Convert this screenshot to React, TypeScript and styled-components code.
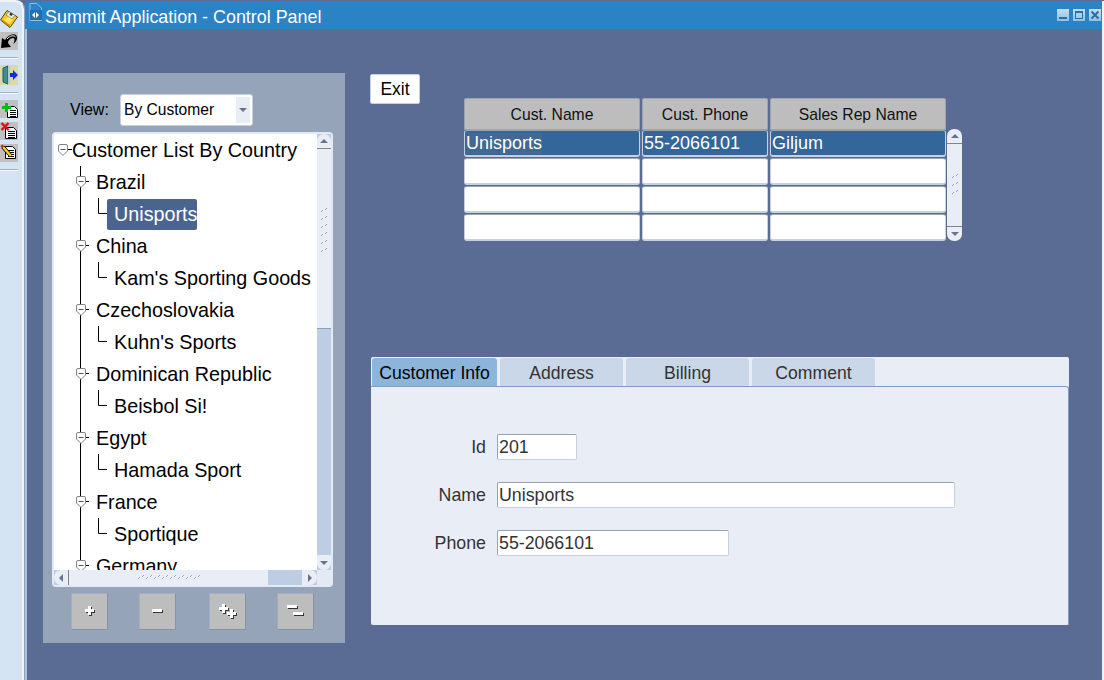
import React, { FC } from 'react';
import styled, { createGlobalStyle } from 'styled-components';

const GlobalStyle = createGlobalStyle`
  html, body {
    margin: 0;
    padding: 0;
    background: #5b6c94;
    overflow: hidden;
  }
  * {
    box-sizing: border-box;
  }
`;

const Page = styled.div`
  display: flex;
  width: 1104px;
  height: 680px;
  overflow: hidden;
  font-family: 'Liberation Sans', Arial, sans-serif;
  color: #000;
  background: #5b6c94;
`;

/* left toolbar */
const ToolStrip = styled.div`
  display: flex;
  flex-direction: column;
  flex: none;
  width: 25px;
  padding-top: 8px;
  background: #d5e4f3;
  border-top: 2px solid #eef4fa;
  border-right: 1px solid #8fa3bf;
  box-shadow: inset -2px 0 0 #eef4fa;
  border-top-right-radius: 9px;
`;

const ToolButton = styled.div<{ $chip?: boolean; $height?: number }>`
  display: flex;
  flex: none;
  width: 18px;
  height: ${p => p.$height ?? 18}px;
  margin-bottom: 4px;
  background: ${p => (p.$chip ? '#c0c0c0' : 'transparent')};
`;

const ToolRule = styled.div`
  width: 18px;
  height: 2px;
  margin: 3px 0 6px;
  background: #f4f7fb;
  border-top: 1px solid #a9b3bf;
`;

/* window */
const Frame = styled.div`
  display: flex;
  flex-direction: column;
  flex: 1;
  margin-top: 1px;
  border-right: 2px solid #eef3f9;
  overflow: hidden;
`;

const TitleBar = styled.div`
  display: flex;
  align-items: center;
  flex: none;
  height: 28px;
  padding: 0 1px 0 3px;
  background: #2b82c5;
  border-left: 1px solid #4a78ab;
  border-top-left-radius: 4px;
`;

const TitleIcon = styled.div`
  display: flex;
  margin-bottom: 7px;
`;

const TitleText = styled.span`
  margin: 4px 0 0 3px;
  font-size: 17.9px;
  color: #fff;
`;

const TitleButtons = styled.div`
  display: flex;
  gap: 4px;
  margin-left: auto;
`;

const TitleButton = styled.div`
  display: flex;
  width: 12px;
  height: 12px;
  background: linear-gradient(#c4def1, #8fc0e5);
`;

const Content = styled.div`
  display: flex;
  flex: 1;
  padding: 44px 0 0 16px;
  border-left: 2px solid #a9c3de;
`;

/* left panel with the tree */
const NavPanel = styled.div`
  display: flex;
  flex-direction: column;
  flex: none;
  width: 302px;
  height: 570px;
  padding: 21px 12px 0 9px;
  background: #95a4b8;
`;

const ViewRow = styled.div`
  display: flex;
  align-items: center;
  height: 32px;
  padding-left: 18px;
  font-size: 16px;
`;

const ViewLabel = styled.span`
  width: 50px;
`;

const Select = styled.div`
  display: flex;
  width: 133px;
  height: 32px;
  padding: 2px;
  background: #fff;
  border: 1px solid #c6d0e0;
  border-radius: 3px;
  font-size: 15.6px;
`;

const SelectValue = styled.span`
  flex: 1;
  padding: 4px 0 0 1px;
`;

const SelectArrow = styled.div`
  display: flex;
  align-items: center;
  justify-content: center;
  width: 14px;
  background: #e9eef6;
`;

const TreeBox = styled.div`
  display: grid;
  grid-template-columns: 1fr 14px;
  grid-template-rows: 1fr 15px;
  width: 281px;
  height: 455px;
  margin-top: 6px;
  background: #c6d3e6;
  border: 2px solid #e4eaf3;
  border-radius: 4px;
`;

const TreeBody = styled.div`
  background: #fff;
  overflow: hidden;
  font-size: 19.75px;
  white-space: nowrap;
`;

const TreeRow = styled.div`
  display: flex;
  align-items: center;
  height: 32px;
`;

const TreeLabel = styled.span<{ $selected?: boolean; $child?: boolean }>`
  display: inline-block;
  height: ${p => (p.$child ? '31px' : 'auto')};
  line-height: ${p => (p.$child ? '31px' : 'normal')};
  padding: ${p => (p.$child ? '0 0 0 7px' : '0')};
  width: ${p => (p.$selected ? '90px' : 'auto')};
  border-radius: 2px;
  background: ${p => (p.$selected ? '#4a648d' : 'transparent')};
  color: ${p => (p.$selected ? '#fff' : '#000')};
`;

const ScrollTrack = styled.div`
  display: flex;
  flex-direction: column;
  align-items: stretch;
  background: #bccde4;
`;

const ScrollFace = styled.div<{ $height: number }>`
  display: flex;
  flex-direction: column;
  height: ${p => p.$height}px;
  background: #e9eef6;
  border-bottom: 1px solid #8fa0b8;
  border-radius: 7px 7px 0 0;
`;

const ScrollEnd = styled.div`
  display: flex;
  align-items: center;
  justify-content: center;
  height: 15px;
  margin-top: auto;
  background: #e9eef6;
  border-radius: 0 0 7px 7px;
`;

const ScrollCap = styled.div`
  display: flex;
  align-items: center;
  justify-content: center;
  flex: none;
  height: 15px;
  border-bottom: 1px solid #7d8794;
`;

const Grip = styled.div<{ $lift?: number }>`
  display: flex;
  flex: 1;
  align-items: center;
  justify-content: center;
  padding-bottom: ${p => p.$lift ?? 0}px;
`;

const HScroll = styled.div`
  display: flex;
  align-items: stretch;
  background: #bccde4;
`;

const HFace = styled.div`
  display: flex;
  align-items: center;
  width: 214px;
  background: #e9eef6;
  border-radius: 7px 0 0 7px;
`;

const HCap = styled.div`
  display: flex;
  align-items: center;
  justify-content: center;
  flex: none;
  width: 15px;
  height: 100%;
  border-right: 1px solid #7d8794;
`;

const HEnd = styled.div`
  display: flex;
  align-items: center;
  justify-content: center;
  width: 15px;
  margin-left: auto;
  background: #e9eef6;
  border-radius: 0 7px 7px 0;
`;

const Corner = styled.div`
  background: #e4eaf3;
`;

const TreeActions = styled.div`
  display: flex;
  gap: 31px;
  margin-top: 6px;
  padding-left: 19px;
`;

const TreeAction = styled.div`
  display: flex;
  align-items: center;
  justify-content: center;
  width: 37px;
  height: 37px;
  background: #bdbdbd;
  border-top: 1px solid #a4afbd;
  border-left: 1px solid #a4afbd;
  border-right: 1px solid #8793a6;
  border-bottom: 1px solid #8793a6;

  &:nth-child(3) {
    margin-left: 2px;
  }
`;

/* right side */
const Main = styled.div`
  display: flex;
  flex-direction: column;
  margin-left: 25px;
`;

const TopRow = styled.div`
  display: flex;
  align-items: flex-start;
`;

const ExitButton = styled.div`
  display: flex;
  align-items: center;
  justify-content: center;
  width: 50px;
  height: 30px;
  margin-top: 1px;
  padding-top: 1px;
  background: #fff;
  border: 1px solid #c6d0e0;
  border-radius: 2px;
  font-size: 17.5px;
`;

const TableArea = styled.div`
  display: flex;
  align-items: flex-end;
  margin: 25px 0 0 44px;
`;

const TableGrid = styled.div`
  display: grid;
  grid-template-columns: 176px 126px 176px;
  grid-template-rows: 31px;
  grid-auto-rows: 27px;
  column-gap: 2px;
  row-gap: 1px;
`;

const HeaderCell = styled.div`
  display: flex;
  align-items: center;
  justify-content: center;
  height: 32px;
  padding-top: 1px;
  background: #bdbdbd;
  border: 1px solid #99a4b5;
  border-radius: 2px 2px 0 0;
  font-size: 15.7px;
  color: #111;
`;

const Cell = styled.div<{ $selected?: boolean }>`
  display: flex;
  align-items: center;
  padding: 1px 0 0 1px;
  background: ${p => (p.$selected ? '#336699' : '#fff')};
  border-style: solid;
  border-width: 1px 1px 2px 1px;
  border-color: #9aa3b0 #c6d0e0 #c6d0e0 #c6d0e0;
  border-radius: 3px;
  font-size: 18px;
  color: ${p => (p.$selected ? '#fff' : '#000')};
`;

const CellText = styled.span<{ $shaded?: boolean }>`
  background: ${p => (p.$shaded ? '#44688f' : 'transparent')};
`;

const TableScroll = styled.div`
  display: flex;
  flex-direction: column;
  width: 15px;
  height: 112px;
  margin-left: 1px;
  background: #e9eef6;
  border-radius: 7px;
`;

const TableScrollEnd = styled(ScrollCap)`
  border-bottom: 0;
  border-top: 1px solid #7d8794;
`;

const TabPanel = styled.div`
  display: flex;
  flex-direction: column;
  width: 698px;
  height: 268px;
  margin: 116px 0 0 1px;
  background: #e9eef6;
  border-radius: 2px;
`;

const TabStrip = styled.div`
  display: flex;
  flex: none;
  gap: 3px;
  height: 29px;
  padding: 1px 0 0 1px;
`;

const Tab = styled.div<{ $active?: boolean; $width: number }>`
  display: flex;
  align-items: center;
  justify-content: center;
  width: ${p => p.$width}px;
  padding-top: 2px;
  background: ${p => (p.$active ? '#8db5d9' : '#c9d7e8')};
  border-radius: 3px 3px 0 0;
  font-size: 17.6px;
  color: ${p => (p.$active ? '#000' : '#333')};
`;

const TabBody = styled.div`
  flex: 1;
  border-top: 1px solid #7d9cc0;
  border-right: 1px solid #7d9cc0;
  border-top-right-radius: 3px;
`;

const Form = styled.div`
  display: grid;
  grid-template-columns: 115px auto;
  align-items: center;
  justify-content: start;
  column-gap: 11px;
  row-gap: 22px;
  padding-top: 47px;
`;

const FieldLabel = styled.span`
  font-size: 17.8px;
  text-align: right;
  color: #333;
`;

const FieldBox = styled.div<{ $width: number }>`
  display: flex;
  align-items: center;
  width: ${p => p.$width}px;
  height: 26px;
  padding-left: 1px;
  background: #fff;
  border: 1px solid #c6d0e0;
  border-top-color: #9aa3b0;
  border-left-color: #9aa3b0;
  border-radius: 2px;
  font-size: 17.8px;
  color: #333;
`;

/* drawings */
const Triangle: FC<{ dir: 'up' | 'down' | 'left' | 'right' }> = ({ dir }) => {
  const points = {
    up: '1,7 5,3 9,7',
    down: '1,3 9,3 5,7',
    left: '7,1 7,9 3,5',
    right: '3,1 3,9 7,5',
  }[dir];
  return (
    <svg width='10' height='10' viewBox='0 0 10 10'>
      <polygon points={points} fill='#6a7488' />
    </svg>
  );
};

const GripDots: FC<{ cols: number; rows: number }> = ({ cols, rows }) => (
  <svg width={cols * 8} height={rows * 8} viewBox={`0 0 ${cols * 8} ${rows * 8}`}>
    {Array.from({ length: rows }).map((_, r) =>
      Array.from({ length: cols }).map((_, c) => (
        <g key={`${r}-${c}`}>
          <path d={`M${c * 8 + 1} ${r * 8 + 5} l2 -2`} stroke='#9aa6b8' />
          <path d={`M${c * 8 + 5} ${r * 8 + 3} l2 -2`} stroke='#9aa6b8' />
        </g>
      )),
    )}
  </svg>
);

const Shield: FC<{ x: number }> = ({ x }) => (
  <g transform={`translate(${x} 0)`}>
    <path
      d='M0.5 12 Q0.5 10.5 2 10.5 H8 Q9.5 10.5 9.5 12 V17 L5 21.5 L0.5 17 Z'
      fill='#fff'
      stroke='#7b8488'
    />
    <path d='M2.5 15.5 H7.5' stroke='#555' />
  </g>
);

const CountryGuide: FC = () => (
  <svg width='42' height='32' viewBox='0 0 42 32'>
    <path d='M26.5 0 V32' stroke='#000' />
    <Shield x={22} />
    <path d='M32 15.5 H35' stroke='#000' />
  </svg>
);

const RootGuide: FC = () => (
  <svg width='18' height='32' viewBox='0 0 18 32'>
    <Shield x={4} />
    <path d='M14 15.5 H18' stroke='#000' />
  </svg>
);

const ChildGuide: FC = () => (
  <svg width='53' height='32' viewBox='0 0 53 32'>
    <path d='M26.5 0 V32' stroke='#000' />
    <path d='M44.5 0 V15.5 H53' stroke='#000' fill='none' />
  </svg>
);

const Floppy: FC = () => (
  <svg width='18' height='18' viewBox='0 0 18 18'>
    <polygon points='7,0.5 17.5,7 10,17.5 0.5,10' fill='#f7c81e' stroke='#5a4600' />
    <polygon points='9,1.5 15,5.5 12,9 6,5' fill='#e6e6e6' stroke='#666' strokeWidth='0.6' />
    <rect x='10' y='3' width='2.5' height='2.5' fill='#333' transform='rotate(32 11 4)' />
    <polygon points='4,10 8,6.5 13,10 9,14.5' fill='#ffe35a' />
    <polygon points='1,10 10,17 10,15 3,10' fill='#e08a00' />
  </svg>
);

const Undo: FC = () => (
  <svg width='18' height='18' viewBox='0 0 18 18'>
    <path
      d='M1 16 L2 6 L5 8 C8 3 13 1 16 3 C18 5 17 10 13 12 C15 9 15 6 13 6 C10 6 8 9 8 11 L11 15 Z'
      fill='#000'
    />
    <path d='M7 7 C10 3.5 14 3 15.5 5' stroke='#fff' fill='none' />
  </svg>
);

const DoorOut: FC = () => (
  <svg width='18' height='20' viewBox='0 0 18 20'>
    <rect x='0' y='0' width='18' height='20' fill='#d9d9ac' />
    <polygon points='3,3 8,1 8,19 3,17' fill='#3f8f8f' stroke='#1f5f5f' />
    <rect x='8' y='1' width='2' height='18' fill='#b8c8d8' />
    <polygon points='10,8 13,8 13,5 18,10 13,15 13,12 10,12' fill='#1030e0' />
  </svg>
);

const DocLines: FC<{ x: number; y: number; w: number; h: number }> = ({ x, y, w, h }) => (
  <>
    <path
      d={`M${x + 0.5} ${y + 0.5} H${x + w - 3.5} L${x + w - 0.5} ${y + 3.5} V${y + h - 0.5} H${x + 0.5} Z`}
      fill='#fff'
      stroke='#000'
    />
    {[4, 6, 8, 10].filter(d => d < h - 1).map(d => (
      <path key={d} d={`M${x + 3} ${y + d + 0.5} H${x + w - 2}`} stroke='#000' />
    ))}
  </>
);

const DocAdd: FC = () => (
  <svg width='18' height='18' viewBox='0 0 18 18'>
    <DocLines x={7} y={6} w={11} h={12} />
    <path d='M6.5 3 V12 M2 7.5 H11' stroke='#00b828' strokeWidth='3' />
  </svg>
);

const DocDelete: FC = () => (
  <svg width='18' height='18' viewBox='0 0 18 18'>
    <DocLines x={5} y={5} w={12} h={12} />
    <path d='M1.5 1 L8.5 8 M8.5 1 L1.5 8' stroke='#e01010' strokeWidth='2.4' />
  </svg>
);

const DocEdit: FC = () => (
  <svg width='18' height='18' viewBox='0 0 18 18'>
    <DocLines x={5} y={2} w={11} h={13} />
    <path d='M3 3 L11 12' stroke='#000' strokeWidth='4' />
    <path d='M3 3 L11 12' stroke='#f0d020' strokeWidth='2.5' />
    <path d='M1.5 1.5 L3 3' stroke='#e01010' strokeWidth='3' />
  </svg>
);

const FormIcon: FC = () => (
  <svg width='13' height='18' viewBox='0 0 13 18'>
    <path d='M1 0.5 H8 L12.5 5 V17.5 H1 Z' fill='#2b82c5' stroke='#8fc0e6' />
    <rect x='1' y='7' width='12' height='10' fill='#1f70b0' />
    <path d='M3 12 L6 9 V15 Z M10 12 L7 9 V15 Z' fill='#fff' />
  </svg>
);

const Minimize: FC = () => (
  <svg width='12' height='12' viewBox='0 0 12 12'>
    <rect x='2' y='8' width='8' height='2' fill='#2a6ea8' />
  </svg>
);

const Maximize: FC = () => (
  <svg width='12' height='12' viewBox='0 0 12 12'>
    <rect x='2.5' y='2.5' width='7' height='7' fill='none' stroke='#2a6ea8' />
    <rect x='2' y='2' width='8' height='2' fill='#2a6ea8' />
  </svg>
);

const CloseIcon: FC = () => (
  <svg width='12' height='12' viewBox='0 0 12 12'>
    <path d='M2.5 2.5 L9.5 9.5 M9.5 2.5 L2.5 9.5' stroke='#2a6ea8' strokeWidth='2' />
  </svg>
);

const PlusMark: FC<{ x: number; y: number }> = ({ x, y }) => (
  <>
    <path
      d={`M${x + 4} ${y + 1} h3 v3 h3 v3 h-3 v3 h-3 v-3 h-3 v-3 h3 Z`}
      fill='#333'
    />
    <path
      d={`M${x + 3} ${y} h3 v3 h3 v3 h-3 v3 h-3 v-3 h-3 v-3 h3 Z`}
      fill='#fff'
    />
  </>
);

const MinusMark: FC<{ x: number; y: number }> = ({ x, y }) => (
  <>
    <rect x={x + 1} y={y + 1} width='10' height='3' fill='#333' />
    <rect x={x} y={y} width='10' height='3' fill='#fff' />
  </>
);

const ActionGlyph: FC<{ kind: 'plus' | 'minus' | 'plusAll' | 'minusAll' }> = ({ kind }) => (
  <svg width='20' height='20' viewBox='0 0 20 20' shapeRendering='crispEdges'>
    {kind === 'plus' && <PlusMark x={5} y={4} />}
    {kind === 'minus' && <MinusMark x={4} y={7} />}
    {kind === 'plusAll' && (
      <>
        <PlusMark x={1} y={2} />
        <PlusMark x={9} y={7} />
      </>
    )}
    {kind === 'minusAll' && (
      <>
        <MinusMark x={1} y={3} />
        <MinusMark x={7} y={10} />
      </>
    )}
  </svg>
);

const tree = [
  ['Brazil', 'Unisports'],
  ['China', "Kam's Sporting Goods"],
  ['Czechoslovakia', "Kuhn's Sports"],
  ['Dominican Republic', 'Beisbol Si!'],
  ['Egypt', 'Hamada Sport'],
  ['France', 'Sportique'],
];

const rows = [
  ['Unisports', '55-2066101', 'Giljum'],
  ['', '', ''],
  ['', '', ''],
  ['', '', ''],
];

export default function App() {
  return (
    <Page>
      <GlobalStyle />
      <ToolStrip>
        <ToolButton><Floppy /></ToolButton>
        <ToolButton $chip><Undo /></ToolButton>
        <ToolRule />
        <ToolButton $height={20}><DoorOut /></ToolButton>
        <ToolRule />
        <ToolButton $chip><DocAdd /></ToolButton>
        <ToolButton $chip><DocDelete /></ToolButton>
        <ToolButton $chip><DocEdit /></ToolButton>
        <ToolRule />
      </ToolStrip>
      <Frame>
        <TitleBar>
          <TitleIcon><FormIcon /></TitleIcon>
          <TitleText>Summit Application - Control Panel</TitleText>
          <TitleButtons>
            <TitleButton><Minimize /></TitleButton>
            <TitleButton><Maximize /></TitleButton>
            <TitleButton><CloseIcon /></TitleButton>
          </TitleButtons>
        </TitleBar>
        <Content>
          <NavPanel>
            <ViewRow>
              <ViewLabel>View:</ViewLabel>
              <Select>
                <SelectValue>By Customer</SelectValue>
                <SelectArrow><Triangle dir='down' /></SelectArrow>
              </Select>
            </ViewRow>
            <TreeBox>
              <TreeBody>
                <TreeRow>
                  <RootGuide />
                  <TreeLabel>Customer List By Country</TreeLabel>
                </TreeRow>
                {tree.map(([country, customer], i) => (
                  <React.Fragment key={country}>
                    <TreeRow>
                      <CountryGuide />
                      <TreeLabel>{country}</TreeLabel>
                    </TreeRow>
                    <TreeRow>
                      <ChildGuide />
                      <TreeLabel $child $selected={i === 0}>{customer}</TreeLabel>
                    </TreeRow>
                  </React.Fragment>
                ))}
                <TreeRow>
                  <CountryGuide />
                  <TreeLabel>Germany</TreeLabel>
                </TreeRow>
              </TreeBody>
              <ScrollTrack>
                <ScrollFace $height={195}>
                  <ScrollCap><Triangle dir='up' /></ScrollCap>
                  <Grip $lift={15}><GripDots cols={1} rows={6} /></Grip>
                </ScrollFace>
                <ScrollEnd><Triangle dir='down' /></ScrollEnd>
              </ScrollTrack>
              <HScroll>
                <HFace>
                  <HCap><Triangle dir='left' /></HCap>
                  <Grip><GripDots cols={8} rows={1} /></Grip>
                </HFace>
                <HEnd><Triangle dir='right' /></HEnd>
              </HScroll>
              <Corner />
            </TreeBox>
            <TreeActions>
              <TreeAction><ActionGlyph kind='plus' /></TreeAction>
              <TreeAction><ActionGlyph kind='minus' /></TreeAction>
              <TreeAction><ActionGlyph kind='plusAll' /></TreeAction>
              <TreeAction><ActionGlyph kind='minusAll' /></TreeAction>
            </TreeActions>
          </NavPanel>
          <Main>
            <TopRow>
              <ExitButton>Exit</ExitButton>
              <TableArea>
                <TableGrid>
                  <HeaderCell>Cust. Name</HeaderCell>
                  <HeaderCell>Cust. Phone</HeaderCell>
                  <HeaderCell>Sales Rep Name</HeaderCell>
                  {rows.map((row, r) =>
                    row.map((value, c) => (
                      <Cell key={`${r}-${c}`} $selected={r === 0}>
                        <CellText $shaded={r === 0 && c === 0}>{value}</CellText>
                      </Cell>
                    )),
                  )}
                </TableGrid>
                <TableScroll>
                  <ScrollCap><Triangle dir='up' /></ScrollCap>
                  <Grip><GripDots cols={1} rows={3} /></Grip>
                  <TableScrollEnd><Triangle dir='down' /></TableScrollEnd>
                </TableScroll>
              </TableArea>
            </TopRow>
            <TabPanel>
              <TabStrip>
                <Tab $active $width={125}>Customer Info</Tab>
                <Tab $width={123}>Address</Tab>
                <Tab $width={123}>Billing</Tab>
                <Tab $width={123}>Comment</Tab>
              </TabStrip>
              <TabBody>
                <Form>
                  <FieldLabel>Id</FieldLabel>
                  <FieldBox $width={80}>201</FieldBox>
                  <FieldLabel>Name</FieldLabel>
                  <FieldBox $width={458}>Unisports</FieldBox>
                  <FieldLabel>Phone</FieldLabel>
                  <FieldBox $width={232}>55-2066101</FieldBox>
                </Form>
              </TabBody>
            </TabPanel>
          </Main>
        </Content>
      </Frame>
    </Page>
  );
}
